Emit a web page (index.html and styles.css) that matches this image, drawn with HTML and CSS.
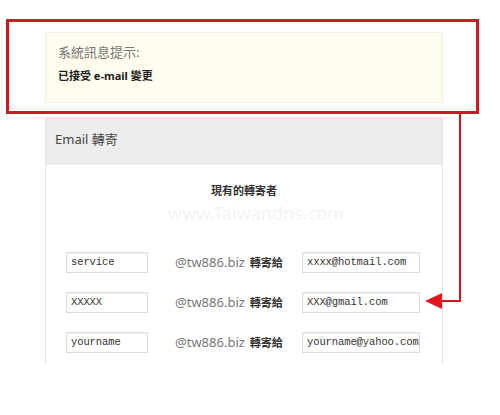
FILE: index.html
```html
<!DOCTYPE html>
<html lang="zh-Hant">
<head>
    <meta charset="UTF-8">
    <meta name="viewport" content="width=device-width, initial-scale=1.0">
    <title>Email 轉寄</title>
    <link rel="stylesheet" href="styles.css">
</head>
<body>
    <!-- 紅框標示 -->
    <div class="mark-box">
        <div class="notice">
            <div class="notice-title">系統訊息提示:</div>
            <div class="notice-text">已接受 e-mail 變更</div>
        </div>
    </div>

    <!-- 轉寄設定 -->
    <div class="panel">
        <div class="panel-head">Email 轉寄</div>
        <div class="panel-body">
            <div class="list-title">現有的轉寄者</div>
            <div class="watermark">www.Taiwandns.com</div>
            <div class="fwd-list">
                <div class="field">service</div>
                <div class="fwd-text"><span class="domain">@tw886.biz</span> <b>轉寄給</b></div>
                <div class="field">xxxx@hotmail.com</div>

                <div class="field">XXXXX</div>
                <div class="fwd-text"><span class="domain">@tw886.biz</span> <b>轉寄給</b></div>
                <div class="field">XXX@gmail.com</div>

                <div class="field">yourname</div>
                <div class="fwd-text"><span class="domain">@tw886.biz</span> <b>轉寄給</b></div>
                <div class="field">yourname@yahoo.com</div>
            </div>
        </div>
    </div>

    <!-- 箭頭 -->
    <svg class="arrow" width="500" height="415" viewBox="0 0 500 415">
        <path d="M460 113 V301 H440" fill="none" stroke="#d0141e" stroke-width="2"/>
        <polygon points="425,301 442,293 442,309" fill="#e8141e"/>
    </svg>
</body>
</html>
```

FILE: styles.css
```css
body {
    margin: 0;
    background: #fff;
    font-family: "Noto Sans", "Noto Sans CJK TC", sans-serif;
    color: #333;
    position: relative;
}
.mark-box {
    box-sizing: border-box;
    width: 473px;
    margin: 19px 0 0 6px;
    border: 3px solid #cc1a22;
    padding: 10px 33px 8px 36px;
}
.notice {
    box-sizing: border-box;
    height: 71px;
    background: #fffdee;
    border: 1px solid #f4f1dc;
    padding: 10px 12px 0;
}
.notice-title {
    font-size: 13px;
    line-height: 18px;
    color: #777;
}
.notice-text {
    margin-top: 7px;
    font-size: 11px;
    line-height: 16px;
    font-weight: bold;
    color: #222;
}
.panel {
    box-sizing: border-box;
    width: 398px;
    margin: 3px 0 0 45px;
    border: 1px solid #e6e6e6;
    border-bottom: none;
}
.panel-head {
    height: 47px;
    box-sizing: border-box;
    background: #ededed;
    padding: 11px 9px 0;
    font-size: 13px;
    line-height: 20px;
    color: #444;
}
.panel-body {
    background: #fff;
    padding: 18px 0 11px;
}
.list-title {
    text-align: center;
    font-size: 11px;
    line-height: 16px;
    font-weight: bold;
    color: #333;
}
.watermark {
    text-align: center;
    padding-left: 24px;
    margin-top: 4px;
    font-size: 18px;
    line-height: 20px;
    color: #f3f3f3;
}
.fwd-list {
    display: grid;
    grid-template-columns: 82px 154px 118px;
    row-gap: 19px;
    margin-top: 29px;
    padding-left: 20px;
}
.field {
    box-sizing: border-box;
    height: 21px;
    border: 1px solid #dcdcdc;
    box-shadow: inset 0 1px 2px #eee;
    padding-left: 4px;
    font-family: "Liberation Mono", monospace;
    font-size: 10.5px;
    letter-spacing: -0.1px;
    line-height: 19px;
    color: #333;
    white-space: nowrap;
    overflow: hidden;
}
.fwd-text {
    padding-left: 27px;
    font-size: 11px;
    line-height: 21px;
    white-space: nowrap;
    color: #333;
}
.domain {
    font-size: 13px;
    color: #777;
}
.fwd-text b {
    margin-left: 2px;
}
.arrow {
    position: absolute;
    top: 0;
    left: 0;
    pointer-events: none;
}
```
